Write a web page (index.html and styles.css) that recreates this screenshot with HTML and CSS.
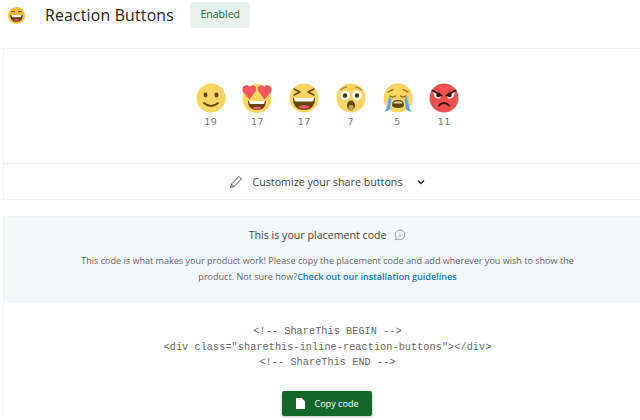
FILE: index.html
```html
<!DOCTYPE html>
<html lang="en">
<head>
<meta charset="utf-8">
<title>Reaction Buttons</title>
<link rel="stylesheet" href="styles.css">
</head>
<body>
<header class="head">
  <span class="head-icon">
    <svg viewBox="0 0 30 30" width="17" height="17"><circle cx="15" cy="15" r="15" fill="#fbbf3c"/><path d="M6 9q3-3 6 0M18 9q3-3 6 0" stroke="#664500" stroke-width="2" fill="none"/><path d="M4 14h22q0 12-11 12T4 14z" fill="#5b3a0a"/><path d="M6 14h18l-1 4H7z" fill="#fff"/><path d="M9 23q6-4 12 0q-6 3-12 0z" fill="#e8596e"/></svg>
  </span>
  <h1 class="title">Reaction Buttons</h1>
  <span class="badge">Enabled</span>
</header>

<section class="card card-top">
  <div class="reactions">
    <div class="reaction">
      <svg class="emoji" viewBox="0 0 30 30"><circle cx="15" cy="15" r="14.5" fill="#fcd462"/><ellipse cx="9.5" cy="12" rx="2" ry="2.4" fill="#664500"/><ellipse cx="20.5" cy="12" rx="2" ry="2.4" fill="#664500"/><path d="M8 20q7 6 14 0" stroke="#664500" stroke-width="1.8" fill="none" stroke-linecap="round"/></svg>
      <span class="count">19</span>
    </div>
    <div class="reaction">
      <svg class="emoji" viewBox="0 0 30 30"><circle cx="15" cy="15.5" r="14.5" fill="#fcd462"/><path d="M6 18h18q0 9-9 9t-9-9z" fill="#664500"/><path d="M7 18h16l-1 3H8z" fill="#fff"/><path d="M10 25q5-3 10 0q-5 3-10 0z" fill="#e8596e"/><path d="M7.500 16.500L1 9Q-1 4 3 2.500Q6 1 7.500 4Q10 1.500 13 3Q15.500 6 13 9z" fill="#f0575f"/><path d="M22.500 16.500L29 9Q31 4 27 2.500Q24 1 22.500 4Q20 1.500 17 3Q14.500 6 17 9z" fill="#f0575f"/></svg>
      <span class="count">17</span>
    </div>
    <div class="reaction">
      <svg class="emoji" viewBox="0 0 30 30"><circle cx="15" cy="15" r="14.500" fill="#fcd462"/><path d="M5 6l6 3-6 3M25 6l-6 3 6 3" stroke="#664500" stroke-width="1.500" fill="none" stroke-linecap="round" stroke-linejoin="round"/><path d="M4 15h22q0 12-11 12T4 15z" fill="#664500"/><path d="M5 15h20l-1 3.500H6z" fill="#fff"/><path d="M9 24q6-4 12 0q-6 3.500-12 0z" fill="#e8596e"/></svg>
      <span class="count">17</span>
    </div>
    <div class="reaction">
      <svg class="emoji" viewBox="0 0 30 30"><circle cx="15" cy="15" r="14.500" fill="#fcd462"/><path d="M4.500 7q3-3.500 6.500-2.500M25.500 7q-3-3.500-6.500-2.500" stroke="#b8862a" stroke-width="1.200" fill="none"/><circle cx="9" cy="12.500" r="4.800" fill="#fff"/><circle cx="21" cy="12.500" r="4.800" fill="#fff"/><circle cx="9" cy="12.500" r="2.200" fill="#4a3208"/><circle cx="21" cy="12.500" r="2.200" fill="#4a3208"/><ellipse cx="15" cy="22.500" rx="4" ry="5" fill="#664500"/><ellipse cx="15" cy="24.500" rx="2.600" ry="2.500" fill="#c9a060"/></svg>
      <span class="count">7</span>
    </div>
    <div class="reaction">
      <svg class="emoji" viewBox="0 0 30 30"><circle cx="15" cy="15" r="14.500" fill="#fcd462"/><path d="M5 9l5-2.500M25 9l-5-2.500M7 13q3 2 5.500 0M17.500 13q2.500 2 5.500 0" stroke="#8a6410" stroke-width="1.300" fill="none" stroke-linecap="round"/><path d="M9 22q0-5 6-5t6 5q0 3-6 3t-6-3z" fill="#664500"/><path d="M10.500 19.500q4.500-2.500 9 0v1h-9z" fill="#e8d9b0"/><path d="M6 14q2 0 2.500 2L7 26q-1 2-6 2.500q2.500-2 3-5z" fill="#5aa9e8"/><path d="M24 14q-2 0-2.500 2L23 26q1 2 6 2.500q-2.500-2-3-5z" fill="#5aa9e8"/></svg>
      <span class="count">5</span>
    </div>
    <div class="reaction">
      <svg class="emoji" viewBox="0 0 30 30"><circle cx="15" cy="15" r="14.500" fill="#ef4f4f"/><path d="M4 8l8 4-1 3.500q-5 .5-6-3.500zM26 8l-8 4 1 3.500q5 .5 6-3.500z" fill="#fff"/><path d="M3.500 7.500l9 5M26.500 7.500l-9 5" stroke="#3a1616" stroke-width="2" stroke-linecap="round"/><circle cx="9.500" cy="12" r="2.300" fill="#3a1616"/><circle cx="20.500" cy="12" r="2.300" fill="#3a1616"/><path d="M10 22.500q5-5 10 0" stroke="#3a1616" stroke-width="2" fill="none" stroke-linecap="round"/></svg>
      <span class="count">11</span>
    </div>
  </div>
  <div class="customize">
    <svg class="pencil" viewBox="0 0 14 14" width="14" height="14"><path d="M1.500 12.500l1-3.500L10 1.500l2.500 2.500L5 11.500z" fill="#fff" stroke="#555" stroke-width="1"/><path d="M2.500 9l2.500 2.500" stroke="#555" stroke-width="1"/></svg>
    <span class="customize-label">Customize your share buttons</span>
    <svg class="chevron" viewBox="0 0 10 10" width="10" height="10"><path d="M2 3.500l3 3 3-3" fill="none" stroke="#222" stroke-width="1.500"/></svg>
  </div>
</section>

<section class="card card-code">
  <div class="intro">
    <h2 class="intro-title">This is your placement code
      <svg class="info" viewBox="0 0 12 12" width="12" height="12"><path d="M6 1a4.800 4.800 0 1 1-2.500 8.900L1.500 11l.6-2.500A4.800 4.800 0 0 1 6 1z" fill="none" stroke="#8a9299" stroke-width=".9"/><path d="M6 3.500v.8M6 5.300v3" stroke="#8a9299" stroke-width="1"/></svg>
    </h2>
    <p class="intro-text">This code is what makes your product work! Please copy the placement code and add wherever you wish to show the<br>product. Not sure how?<a class="link" href="#">Check out our installation guidelines</a></p>
  </div>
  <div class="code-area">
    <pre class="code">&lt;!-- ShareThis BEGIN --&gt;
&lt;div class="sharethis-inline-reaction-buttons"&gt;&lt;/div&gt;
&lt;!-- ShareThis END --&gt;</pre>
    <button class="copy" type="button">
      <svg viewBox="0 0 10 12" width="9" height="11"><path d="M0 0h6.500L10 3.500V12H0z" fill="#fff"/></svg>
      Copy code
    </button>
  </div>
</section>
</body>
</html>
```
FILE: styles.css
```css
html, body {
  margin: 0;
  padding: 0;
  background: #fff;
  overflow: hidden;
}
body {
  width: 640px;
  height: 420px;
  font-family: "Open Sans", sans-serif;
  color: #333;
}
.head {
  display: flex;
  align-items: center;
  height: 30px;
  padding-left: 8px;
}
.head-icon {
  display: flex;
  width: 17px;
  height: 17px;
}
.title {
  margin: 0 0 0 20px;
  font-size: 15.800px;
  font-weight: 400;
  letter-spacing: .2px;
  color: #222;
}
.badge {
  margin-left: 16px;
  padding: 0 10.500px;
  height: 26px;
  line-height: 24px;
  font-size: 10.500px;
  font-weight: 500;
  color: #1c6b35;
  background: #e9f1ec;
  border-radius: 4px;
}
.card {
  width: 648px;
  box-sizing: border-box;
  margin-left: 3px;
  border: 1px solid #f2f2f2;
  border-right: 0;
}
.card-top {
  margin-top: 18px;
  height: 152px;
  display: flex;
  flex-direction: column;
}
.reactions {
  display: flex;
  justify-content: center;
  height: 114px;
  padding: 34px 0 0;
  box-sizing: border-box;
}
.reaction {
  width: 46.700px;
  display: flex;
  flex-direction: column;
  align-items: center;
}
.emoji {
  width: 30px;
  height: 30px;
}
.count {
  margin-top: 2px;
  font-family: "DejaVu Sans", sans-serif;
  font-size: 9.500px;
  line-height: 14px;
  color: #777;
  letter-spacing: .4px;
}
.customize {
  flex: 1;
  display: flex;
  align-items: center;
  justify-content: center;
  border-top: 1px solid #f0f0f0;
  font-size: 10.700px;
  color: #444;
}
.customize-label {
  margin: 0 13px 0 9px;
  font-weight: 500;
}
.card-code {
  margin-top: 16px;
  border-bottom: 0;
}
.intro {
  height: 86px;
  background: #f3f8fc;
  text-align: center;
  padding-top: 10px;
  box-sizing: border-box;
}
.intro-title {
  margin: 0;
  font-size: 10.650px;
  font-weight: 500;
  line-height: 16px;
  color: #444;
}
.info {
  margin-left: 5px;
  vertical-align: -2px;
}
.intro-text {
  margin: 10px 0 0;
  font-size: 9.060px;
  line-height: 15.500px;
  color: #666;
}
.link {
  font-weight: 600;
  color: #1476c4;
  text-decoration: none;
}
.code-area {
  text-align: center;
  padding-top: 21px;
}
.code {
  margin: 0;
  font-family: "Liberation Mono", monospace;
  font-size: 10.150px;
  letter-spacing: .11px;
  line-height: 15.500px;
  color: #666;
}
.copy {
  display: inline-flex;
  align-items: center;
  justify-content: center;
  gap: 9px;
  margin: 20px 2px 0 0;
  width: 90px;
  height: 25px;
  padding: 0 0 0 2px;
  border: 0;
  border-radius: 2px;
  background: #146628;
  color: #fff;
  font-family: "Open Sans", sans-serif;
  font-size: 9.100px;
  font-weight: 500;
  box-shadow: 0 1px 3px rgba(0,0,0,.25);
}
```
